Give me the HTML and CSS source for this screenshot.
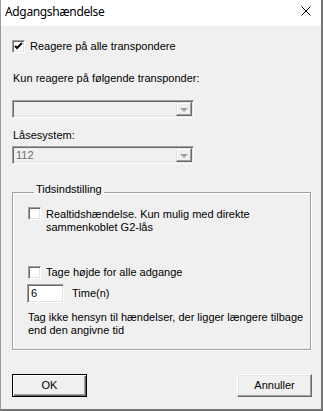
FILE: index.html
```html
<!DOCTYPE html>
<html>
<head>
<meta charset="utf-8">
<link rel="stylesheet" href="styles.css">
</head>
<body>
<div class="window">
  <div class="titlebar">
    <span class="title">Adgangshændelse</span>
    <svg class="close" width="10" height="10" viewBox="0 0 10 10"><path d="M0.5 0.5 L9.5 9.5 M9.5 0.5 L0.5 9.5" stroke="#000" stroke-width="1" fill="none"/></svg>
  </div>
  <div class="content">
    <div class="check-row first">
      <span class="box checked"><svg width="9" height="9" viewBox="0 0 9 9"><path d="M1 4 L3 6 L8 1" stroke="#000" stroke-width="2" fill="none"/></svg></span>
      <span class="label">Reagere på alle transpondere</span>
    </div>
    <div class="text lbl-trans">Kun reagere på følgende transponder:</div>
    <div class="combo combo1"><span class="val"></span><span class="drop"><span class="arrow"></span></span></div>
    <div class="text lbl-sys">Låsesystem:</div>
    <div class="combo combo2"><span class="val">112</span><span class="drop"><span class="arrow"></span></span></div>
    <fieldset class="group">
      <legend>Tidsindstilling</legend>
      <div class="check-row realtime">
        <span class="box"></span>
        <span class="label wrap">Realtidshændelse. Kun mulig med direkte sammenkoblet G2-lås</span>
      </div>
      <div class="check-row all">
        <span class="box"></span>
        <span class="label">Tage højde for alle adgange</span>
      </div>
      <div class="hours-row">
        <span class="input">6</span>
        <span class="text">Time(n)</span>
      </div>
      <div class="text note">Tag ikke hensyn til hændelser, der ligger længere tilbage end den angivne tid</div>
    </fieldset>
    <div class="buttons">
      <span class="btn default">OK</span>
      <span class="btn">Annuller</span>
    </div>
  </div>
</div>
</body>
</html>
```
FILE: styles.css
```css
html, body {
  margin: 0;
  padding: 0;
  background: #f0f0f0;
}
.window {
  width: 323px;
  height: 411px;
  box-sizing: border-box;
  background: #f0f0f0;
  border-left: 1px solid #9a9a9a;
  border-right: 2px solid #747474;
  border-bottom: 2px solid #747474;
  font-family: "Liberation Sans", Arial, sans-serif;
  font-size: 11px;
  line-height: 13px;
  color: #000;
  display: flex;
  flex-direction: column;
}
.titlebar {
  height: 26px;
  background: #fff;
  display: flex;
  align-items: center;
  justify-content: space-between;
  padding: 0 10px 0 4px;
}
.title {
  font-family: "Noto Sans", "Segoe UI", sans-serif;
  font-size: 12px;
  letter-spacing: -0.35px;
  line-height: 16px;
  margin-top: -2px;
}
.close {
  margin-top: -4px;
}
.content {
  padding: 14px 8px 0 11px;
  display: flex;
  flex-direction: column;
  align-items: flex-start;
}
.check-row {
  display: flex;
  align-items: flex-start;
}
.box {
  width: 13px;
  height: 13px;
  box-sizing: border-box;
  background: #fff;
  border: 1px solid;
  border-color: #a0a0a0 #fff #fff #a0a0a0;
  box-shadow: inset 1px 1px 0 #696969, inset -1px -1px 0 #e3e3e3;
  flex: none;
  display: flex;
  align-items: center;
  justify-content: center;
}
.label {
  margin-left: 5px;
}
.wrap {
  width: 250px;
}
.lbl-trans {
  margin-top: 19px;
  margin-left: 1px;
}
.lbl-sys {
  margin-top: 11px;
  margin-left: 1px;
}
.combo {
  width: 182px;
  height: 18px;
  box-sizing: border-box;
  border: 1px solid;
  border-color: #a0a0a0 #fff #fff #a0a0a0;
  box-shadow: inset 1px 1px 0 #696969, inset -1px -1px 0 #e3e3e3;
  display: flex;
  justify-content: space-between;
  padding: 1px;
  color: #6d6d6d;
}
.combo1 {
  margin-top: 15px;
}
.combo2 {
  margin-top: 4px;
}
.val {
  padding-left: 2px;
  line-height: 14px;
}
.drop {
  width: 16px;
  box-sizing: border-box;
  border: 1px solid;
  border-color: #e3e3e3 #696969 #696969 #e3e3e3;
  box-shadow: inset -1px -1px 0 #a0a0a0, inset 1px 1px 0 #fff;
  background: #f0f0f0;
  display: flex;
  align-items: center;
  justify-content: center;
}
.arrow {
  width: 0;
  height: 0;
  border-left: 4px solid transparent;
  border-right: 4px solid transparent;
  border-top: 4px solid #a0a0a0;
  margin-top: 1px;
}
.group {
  margin: 19px 0 0 0;
  padding: 0 0 12px 15px;
  width: 299px;
  box-sizing: border-box;
  border: 1px solid #a0a0a0;
  box-shadow: inset 1px 1px 0 #fff, 1px 1px 0 #fff;
  min-width: 0;
}
.group legend {
  margin-left: 6px;
  padding: 0 2px 5px 2px;
  line-height: 13px;
}
.realtime {
  margin-top: 6px;
}
.realtime .label {
  margin-top: 1px;
}
.all {
  margin-top: 32px;
}
.hours-row {
  display: flex;
  align-items: center;
  margin-top: 5px;
  margin-left: -1px;
}
.input {
  width: 37px;
  height: 19px;
  box-sizing: border-box;
  background: #fff;
  border: 1px solid;
  border-color: #a0a0a0 #fff #fff #a0a0a0;
  box-shadow: inset 1px 1px 0 #696969, inset -1px -1px 0 #e3e3e3;
  padding: 2px 0 0 3px;
  line-height: 13px;
}
.hours-row .text {
  margin-left: 8px;
}
.note {
  margin-top: 8px;
  width: 285px;
}
.buttons {
  margin-top: 24px;
  width: 300px;
  display: flex;
  justify-content: space-between;
}
.btn {
  width: 75px;
  height: 23px;
  box-sizing: border-box;
  border: 1px solid;
  border-color: #fff #696969 #696969 #fff;
  box-shadow: inset -1px -1px 0 #a0a0a0, inset 1px 1px 0 #e3e3e3;
  display: flex;
  align-items: center;
  justify-content: center;
  background: #f0f0f0;
}
.btn.default {
  border: 1px solid #000;
  box-shadow: inset 1px 1px 0 #fff, inset -1px -1px 0 #696969, inset -2px -2px 0 #a0a0a0;
}
```
